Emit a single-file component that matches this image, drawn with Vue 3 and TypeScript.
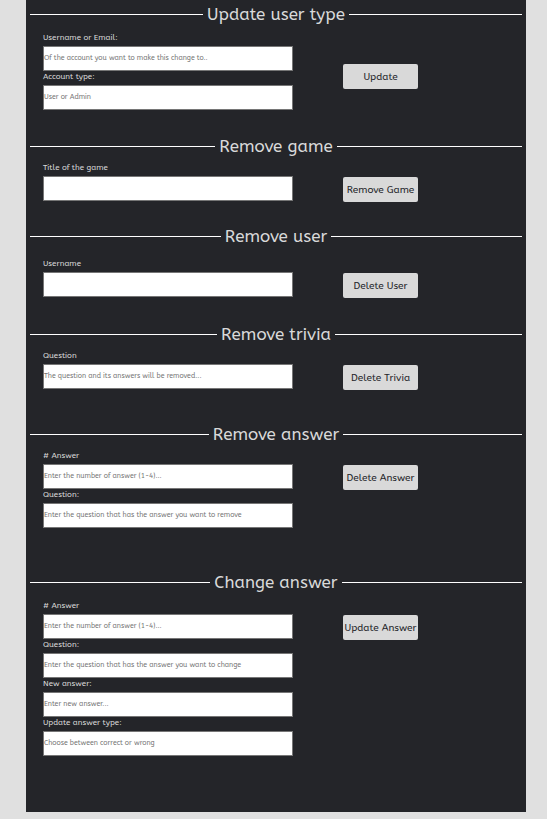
<script setup lang="ts">
interface Field {
  id: string
  label: string
  placeholder: string
}

interface Section {
  title: string
  action: string
  head: 'tight' | 'regular' | 'loose'
  tail: 'xs' | 'sm' | 'md' | 'lg' | 'xl'
  fields: Field[]
}

const sections: Section[] = [
  {
    title: 'Update user type',
    action: 'Update',
    head: 'regular',
    tail: 'sm',
    fields: [
      { id: 'account', label: 'Username or Email:', placeholder: 'Of the account you want to make this change to..' },
      { id: 'account-type', label: 'Account type:', placeholder: 'User or Admin' },
    ],
  },
  {
    title: 'Remove game',
    action: 'Remove Game',
    head: 'tight',
    tail: 'xs',
    fields: [{ id: 'game-title', label: 'Title of the game', placeholder: '' }],
  },
  {
    title: 'Remove user',
    action: 'Delete User',
    head: 'loose',
    tail: 'sm',
    fields: [{ id: 'username', label: 'Username', placeholder: '' }],
  },
  {
    title: 'Remove trivia',
    action: 'Delete Trivia',
    head: 'tight',
    tail: 'md',
    fields: [{ id: 'trivia', label: 'Question', placeholder: 'The question and its answers will be removed...' }],
  },
  {
    title: 'Remove answer',
    action: 'Delete Answer',
    head: 'tight',
    tail: 'lg',
    fields: [
      { id: 'remove-number', label: '# Answer', placeholder: 'Enter the number of answer (1-4)...' },
      { id: 'remove-question', label: 'Question:', placeholder: 'Enter the question that has the answer you want to remove' },
    ],
  },
  {
    title: 'Change answer',
    action: 'Update Answer',
    head: 'regular',
    tail: 'xl',
    fields: [
      { id: 'change-number', label: '# Answer', placeholder: 'Enter the number of answer (1-4)...' },
      { id: 'change-question', label: 'Question:', placeholder: 'Enter the question that has the answer you want to change' },
      { id: 'new-answer', label: 'New answer:', placeholder: 'Enter new answer...' },
      { id: 'answer-type', label: 'Update answer type:', placeholder: 'Choose between correct or wrong' },
    ],
  },
]
</script>

<template>
  <main class="panel">
    <section v-for="(section, index) in sections" :key="section.title" :class="['section', `tail-${section.tail}`]">
      <h2 class="title">{{ section.title }}</h2>
      <form :class="['form', `head-${section.head}`]" @submit.prevent>
        <div class="fields">
          <div v-for="field in section.fields" :key="field.id" class="field">
            <label class="label" :for="field.id">{{ field.label }}</label>
            <input :id="field.id" class="input" type="text" :placeholder="field.placeholder" />
          </div>
        </div>
        <button :class="['button', { lowered: index === 0 }]" type="submit">{{ section.action }}</button>
      </form>
    </section>
  </main>
</template>

<style>
body {
  background: #e0e0e0;
}
</style>

<style scoped>
.panel {
  margin: 0 21px 10px 26px;
  padding: 2px 4px 0;
  background: #242529;
  color: #d9d9d9;
  font-family: ABeeZee, "Noto Sans", sans-serif;
}

.section {
  display: flex;
  flex-direction: column;
}

.tail-xs { padding-bottom: 22px; }
.tail-sm { padding-bottom: 24px; }
.tail-md { padding-bottom: 32px; }
.tail-lg { padding-bottom: 42px; }
.tail-xl { padding-bottom: 56px; }

.title {
  display: flex;
  align-items: center;
  gap: 4px;
  margin: 0;
  font-size: 17px;
  font-weight: 400;
  line-height: 24px;
  white-space: nowrap;
}

.title::before,
.title::after {
  content: "";
  flex: 1;
  height: 1px;
  background: #fff;
}

.form {
  display: grid;
  grid-template-columns: minmax(0, 250px) 75px;
  align-items: start;
  column-gap: 50px;
  padding-left: 13px;
}

.head-tight { padding-top: 4px; }
.head-regular { padding-top: 6px; }
.head-loose { padding-top: 10px; }

.field {
  display: flex;
  flex-direction: column;
}

.label {
  padding-bottom: 2px;
  font-size: 8px;
  font-weight: 600;
  line-height: 12px;
}

.input {
  box-sizing: border-box;
  width: 100%;
  height: 25px;
  padding: 0 0 2px;
  border: 1px solid #767676;
  background: #fff;
  color: #222;
  font-family: inherit;
  font-size: 7px;
}

.input::placeholder {
  color: #757575;
  opacity: 1;
}

.button {
  display: flex;
  align-items: center;
  justify-content: center;
  height: 25px;
  margin-top: 15px;
  padding: 0;
  border: 0;
  border-radius: 2px;
  background: #d9d9d9;
  color: #242529;
  font-family: inherit;
  font-size: 10px;
  line-height: 12px;
}

.lowered {
  margin-top: 32px;
}
</style>
